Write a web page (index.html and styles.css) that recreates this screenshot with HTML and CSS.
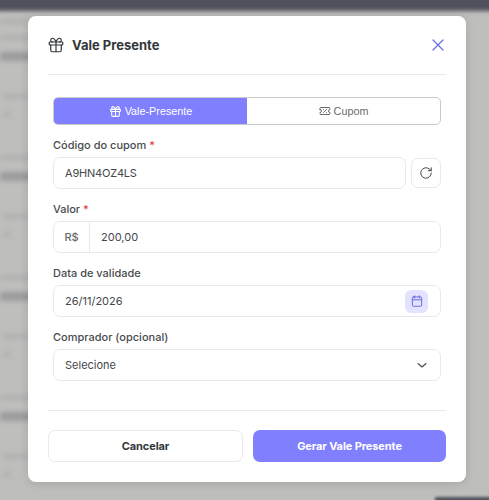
FILE: index.html
```html
<!DOCTYPE html>
<html>
<head>
<meta charset="UTF-8">
<link rel="stylesheet" href="styles.css">
</head>
<body>
<div class="backdrop">
	<div class="topbar"></div>
	<div class="rows">
		<div class="bar bar-first"></div>
		<div class="row"><div class="bar"></div><div class="bar bar-bold"></div><div class="bar bar-wide"></div><div class="bar bar-short"></div></div>
		<div class="row"><div class="bar"></div><div class="bar bar-bold"></div><div class="bar bar-wide"></div><div class="bar bar-short"></div></div>
		<div class="row"><div class="bar"></div><div class="bar bar-bold"></div><div class="bar bar-wide"></div><div class="bar bar-short"></div></div>
		<div class="row"><div class="bar"></div><div class="bar bar-bold"></div><div class="bar bar-wide"></div><div class="bar bar-short"></div></div>
	</div>
	<div class="corner"></div>
</div>

<div class="modal">
	<div class="modal-head">
		<svg class="head-icon" width="18" height="18" viewBox="0 0 24 24"><rect x="3" y="8" width="18" height="4" rx="1"/><path d="M12 8v13M19 12v7a2 2 0 0 1-2 2H7a2 2 0 0 1-2-2v-7M7.500 8a2.500 2.500 0 0 1 0-5C10 3 12 8 12 8s2-5 4.500-5a2.500 2.500 0 0 1 0 5"/></svg>
		<h2 class="modal-title">Vale Presente</h2>
		<svg class="close-icon" width="14" height="14" viewBox="0 0 14 14"><path d="M2 2l10 10M12 2L2 12"/></svg>
	</div>

	<div class="modal-body">
		<div class="tabs">
			<div class="tab tab-active">
				<svg width="13" height="13" viewBox="0 0 24 24"><rect x="3" y="8" width="18" height="4" rx="1"/><path d="M12 8v13M19 12v7a2 2 0 0 1-2 2H7a2 2 0 0 1-2-2v-7M7.500 8a2.500 2.500 0 0 1 0-5C10 3 12 8 12 8s2-5 4.500-5a2.500 2.500 0 0 1 0 5"/></svg>
				Vale-Presente
			</div>
			<div class="tab">
				<svg width="12" height="12" viewBox="0 0 24 24"><path d="M2 9V7a2 2 0 0 1 2-2h16a2 2 0 0 1 2 2v2a3 3 0 0 0 0 6v2a2 2 0 0 1-2 2H4a2 2 0 0 1-2-2v-2a3 3 0 0 0 0-6z"/><path d="M9 15l6-6M9 9h.01M15 15h.01"/></svg>
				Cupom
			</div>
		</div>

		<div class="field">
			<label class="label">Código do cupom <span class="req">*</span></label>
			<div class="code-row">
				<div class="input grow">A9HN4OZ4LS</div>
				<div class="refresh">
					<svg width="14" height="14" viewBox="0 0 24 24"><path d="M21 12a9 9 0 1 1-3-6.700L21 8"/><path d="M21 3v5h-5"/></svg>
				</div>
			</div>
		</div>

		<div class="field">
			<label class="label">Valor <span class="req">*</span></label>
			<div class="input money">
				<span class="prefix">R$</span>
				<span class="money-value">200,00</span>
			</div>
		</div>

		<div class="field">
			<label class="label">Data de validade</label>
			<div class="input between">
				26/11/2026
				<span class="cal">
					<svg width="14" height="14" viewBox="0 0 24 24"><rect x="4" y="5" width="16" height="16" rx="2"/><path d="M4 10h16M8 3v4M16 3v4"/></svg>
				</span>
			</div>
		</div>

		<div class="field">
			<label class="label">Comprador (opcional)</label>
			<div class="input between">
				Selecione
				<svg class="chev" width="12" height="12" viewBox="0 0 12 12"><path d="M2 4.500l4 3.500 4-3.500"/></svg>
			</div>
		</div>
	</div>

	<div class="modal-foot">
		<button class="btn btn-cancel">Cancelar</button>
		<button class="btn btn-primary">Gerar Vale Presente</button>
	</div>
</div>
</body>
</html>
```

FILE: styles.css
```css
html, body {
	margin: 0;
	height: 500px;
	overflow: hidden;
}

body {
	font-family: 'Inter', sans-serif;
	background-color: #bebfbd;
	color: #33373a;
}

svg {
	fill: none;
	stroke: currentColor;
	stroke-width: 2;
	stroke-linecap: round;
	stroke-linejoin: round;
	flex: none;
}

/* blurred page behind the modal */
.backdrop {
	position: absolute;
	top: 0;
	left: 0;
	right: 0;
	bottom: 0;
	overflow: hidden;
}

.topbar {
	height: 15px;
	margin: -4px -6px 0;
	background-color: #50505c;
	filter: blur(2px);
}

.rows {
	padding-top: 8px;
	filter: blur(2.5px);
}

.row {
	height: 120px;
}

.bar {
	width: 40px;
	height: 5px;
	background-color: #afb0af;
}

.bar-first {
	margin-bottom: 11px;
}

.bar-bold {
	height: 9px;
	margin-top: 12px;
	background-color: #9a9b9b;
}

.bar-wide {
	margin: 33px 0 0 3px;
}

.bar-short {
	width: 7px;
	margin: 13px 0 0 3px;
}

.corner {
	position: absolute;
	left: 435px;
	top: 497px;
	width: 70px;
	height: 10px;
	background-color: #50505c;
	filter: blur(1.5px);
}

/* modal */
.modal {
	position: absolute;
	top: 16px;
	left: 28px;
	width: 438px;
	height: 466px;
	box-sizing: border-box;
	padding: 0 20px;
	background-color: white;
	border-radius: 8px;
	box-shadow: 0 2px 10px rgba(0, 0, 0, 0.12);
}

.modal-head {
	height: 59px;
	box-sizing: border-box;
	display: flex;
	align-items: center;
	border-bottom: 1px solid #e8e9ea;
}

.head-icon {
	margin: 0 7.5px 0 -1.5px;
	stroke-width: 1.6;
	color: #33373a;
}

.modal-title {
	flex: 1;
	margin: 0;
	font-size: 13px;
	font-weight: 700;
	color: #33373a;
}

.close-icon {
	stroke: #6a6ae0;
	stroke-width: 1.2;
	margin-right: 1px;
}

.modal-body {
	height: 336px;
	box-sizing: border-box;
	padding: 22px 5px 0;
	border-bottom: 1px solid #e8e9ea;
}

.tabs {
	display: flex;
	height: 28px;
	box-sizing: border-box;
	border: 1px solid #c9cacb;
	border-radius: 5px;
	overflow: hidden;
	margin-bottom: 12px;
}

.tab {
	flex: 1;
	display: flex;
	align-items: center;
	justify-content: center;
	gap: 3px;
	font-family: 'Liberation Sans', sans-serif;
	font-size: 10.8px;
	color: #6a6b6d;
}

.tab-active {
	background-color: #8080ff;
	color: white;
}

.field {
	margin-bottom: 12px;
}

.label {
	display: block;
	font-size: 11px;
	font-weight: 500;
	line-height: 16px;
	margin-bottom: 4px;
	color: #484c4f;
}

.req {
	color: #e53935;
}

.input {
	height: 32px;
	box-sizing: border-box;
	border: 1px solid #e8e9ea;
	border-radius: 7px;
	padding: 0 11px;
	display: flex;
	align-items: center;
	font-size: 11px;
	color: #44484b;
	background-color: white;
}

.grow {
	flex: 1;
	letter-spacing: -0.2px;
}

.code-row {
	display: flex;
	align-items: center;
	gap: 5px;
}

.refresh {
	width: 30px;
	height: 30px;
	box-sizing: border-box;
	border: 1px solid #e8e9ea;
	border-radius: 7px;
	display: flex;
	align-items: center;
	justify-content: center;
	color: #44484b;
}

.refresh svg {
	stroke-width: 1.7;
}

.money {
	padding: 0;
}

.prefix {
	width: 35px;
	height: 100%;
	display: flex;
	align-items: center;
	justify-content: center;
	border-right: 1px solid #e8e9ea;
	color: #66696c;
	font-weight: 500;
}

.money-value {
	padding-left: 11px;
}

.between {
	justify-content: space-between;
}

.cal {
	width: 23px;
	height: 23px;
	margin-right: 1px;
	border-radius: 6px;
	background-color: #e3e3ff;
	color: #6a6ae0;
	display: flex;
	align-items: center;
	justify-content: center;
}

.cal svg {
	stroke-width: 1.7;
}

.chev {
	stroke: #44484b;
	stroke-width: 1.1;
	margin-right: 1px;
}

.modal-foot {
	display: flex;
	gap: 10px;
	padding-top: 19px;
}

.btn {
	flex: 1;
	height: 32px;
	border-radius: 7px;
	font-family: 'Inter', sans-serif;
	font-size: 11px;
	font-weight: 700;
	letter-spacing: -0.1px;
}

.btn-cancel {
	background-color: white;
	border: 1px solid #e8e9ea;
	color: #33373a;
}

.btn-primary {
	background-color: #8080ff;
	border: none;
	color: white;
}
```
